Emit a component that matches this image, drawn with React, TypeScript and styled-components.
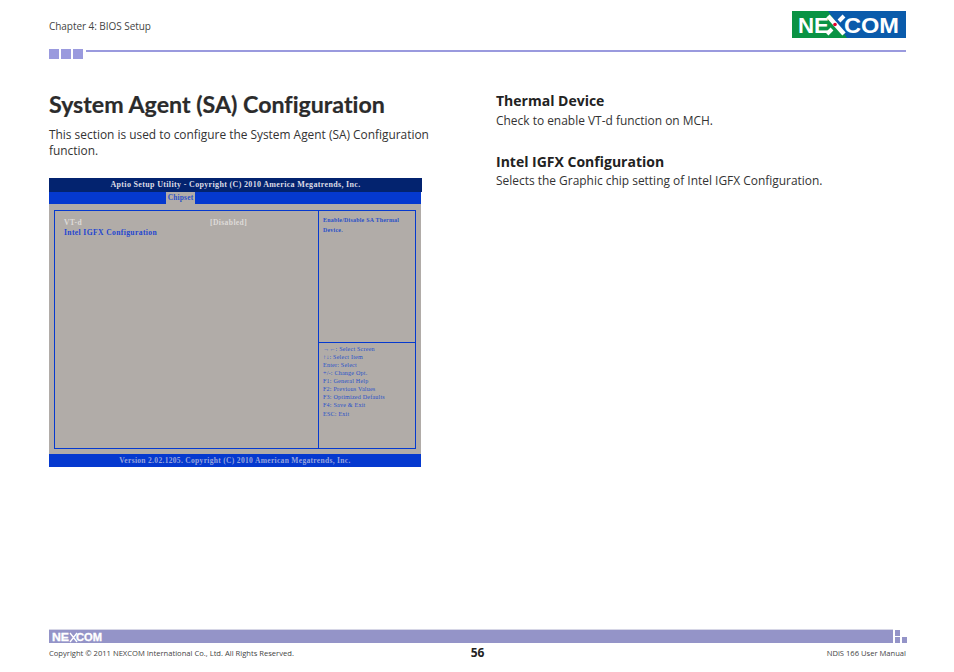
import React from "react";
import styled, { createGlobalStyle } from "styled-components";

const Global = createGlobalStyle`
  html, body { margin: 0; padding: 0; background: #fff; }
  body { font-family: "Open Sans", "Noto Sans", sans-serif; color: #3c3c3c; }
`;
const Page = styled.div`
  width: 954px; height: 672px; overflow: hidden; display: flex; flex-direction: column;
  box-sizing: border-box; padding: 11px 48px 0 49px;
`;
const Header = styled.header`
  height: 27px; display: flex; justify-content: space-between; align-items: center;
`;
const Chapter = styled.div`font-size: 10px; line-height: 14px; color: #444; letter-spacing: -0.05px; margin-top: 3px;`;
const Rule = styled.div`
  height: 10px; margin-top: 11px; display: flex; gap: 2px; align-items: flex-start;
`;
const Square = styled.span`width: 10px; height: 10px; background: #9a9ade; flex: none;`;
const RuleLine = styled.span`flex: 1; height: 2px; margin-left: 1px; margin-top: 1px; background: #9a9ade;`;
const Columns = styled.main`
  display: flex; flex: 1; min-height: 0;
`;
const Left = styled.section`width: 447px; flex: none; padding-top: 29px;`;
const Right = styled.section`flex: 1; padding-top: 32px;`;
const Title = styled.h1`
  margin: 0; font-family: "Lato", "Open Sans", sans-serif; font-size: 23.2px; line-height: 32px; font-weight: 700; color: #2b2b2b;
  font-variant-ligatures: none; -webkit-text-stroke: 0.2px #2b2b2b;
`;
const Para = styled.p`
  margin: 6px 0 0; width: 400px; font-size: 11.9px; line-height: 16px; color: #333;
`;
const Heading = styled.h2<{ $top?: number }>`
  margin: ${p => p.$top ?? 0}px 0 0; font-size: 14px; line-height: 20px; font-weight: 700; color: #222;
`;
const Body = styled.p<{ $top: number }>`
  margin: ${p => p.$top}px 0 0; font-size: 11.95px; line-height: 16px; color: #333;
`;

const Bios = styled.div`
  margin-top: 20px; width: 373px; font-family: "Liberation Serif", serif; font-weight: 700; font-size: 6.9px;
`;
const BiosTitle = styled.div`
  height: 14px; background: #03236f; color: #dcdce6; font-size: 8px; letter-spacing: 0.34px; line-height: 14px; text-align: center;
`;
const TabBar = styled.div`
  height: 12px; width: 372px; background: #0539cf; padding-left: 117px; box-sizing: border-box;
`;
const Tab = styled.span`
  display: inline-block; height: 12px; width: 29px; box-sizing: border-box; text-align: center;
  background: #b1aca8; color: #2a50c8; line-height: 12px; font-size: 7.4px; letter-spacing: 0.2px;
`;
const Gray = styled.div`
  width: 372px; height: 250px; box-sizing: border-box; background: #b1aca8; padding: 6px 5px 5px 5px;
`;
const Frame = styled.div`
  height: 239px; border: 1px solid #0539cf; display: grid; grid-template-columns: 264px 1fr; box-sizing: border-box;
`;
const MainPane = styled.div`padding: 7px 0 0 9px; border-right: 1px solid #0539cf;`;
const SideCol = styled.div`display: grid; grid-template-rows: 132px 1fr;`;
const HelpTop = styled.div`
  border-bottom: 1px solid #0539cf; padding: 4px 8px 0 4px; color: #2a50c8; font-size: 5.9px; letter-spacing: 0.25px; line-height: 10px;
`;
const HelpKeys = styled.div`padding: 2px 0 0 4px; color: #2a52c8; font-size: 6.1px; letter-spacing: 0.2px; font-weight: 400; line-height: 8px;`;
const Row = styled.div`display: flex; height: 10px; line-height: 10px; font-size: 7.6px; letter-spacing: 0.38px;`;
const RowLabel = styled.span<{ $link?: boolean }>`width: 146px; color: ${p => (p.$link ? "#1f46d0" : "#dedbd8")};`;
const RowValue = styled.span`color: #dedbd8;`;
const KeyLine = styled.div<{ $gap?: boolean }>`white-space: nowrap; margin-top: ${p => (p.$gap ? 1 : 0)}px;`;
const BiosFoot = styled.div`
  height: 13px; width: 372px; background: #0539cf; color: #98a4dc; text-align: center; font-size: 7.5px; letter-spacing: 0.32px; line-height: 13px;
`;

const Footer = styled.footer`margin-top: auto; padding-bottom: 12px;`;
const BarRow = styled.div`display: flex; gap: 2px; align-items: flex-start;`;
const Bar = styled.div`
  flex: none; width: 844px; height: 14px; background: #9494c8; border-top: 1px solid #d6d6e6;
  box-sizing: border-box; display: flex; align-items: center; padding-left: 2px;
`;
const Dots = styled.div`
  display: grid; grid-template-columns: 5px 5px; grid-auto-rows: 6px; gap: 1px 2px; margin-top: 1px;
`;
const Dot = styled.span<{ $off?: boolean }>`background: ${p => (p.$off ? "transparent" : "#9494c8")};`;
const FootText = styled.div`
  display: grid; grid-template-columns: 1fr auto 1fr; align-items: center; margin-top: 1px; height: 16px; color: #444; font-size: 7.6px;
`;
const PageNo = styled.span`font-size: 12px; font-weight: 700; color: #222;`;
const Manual = styled.span`text-align: right;`;

const Logo = () => (
  <svg width="114" height="27" viewBox="0 0 114 27">
    <rect width="114" height="27" fill="#0a5bab" />
    <polygon points="0,0 36,0 55,27 0,27" fill="#0a9344" />
    <text x="6" y="22" fontFamily="Liberation Sans" fontWeight="700" fontSize="22" fill="#fff" textLength="31" lengthAdjust="spacingAndGlyphs">NE</text>
    <path d="M36 5 L52 23" stroke="#fff" strokeWidth="4.5" />
    <path d="M52 5 L47 10 M40 18 L35 23" stroke="#fff" strokeWidth="4" />
    <circle cx="43" cy="13.5" r="1.8" fill="#e4002b" />
    <text x="52" y="22" fontFamily="Liberation Sans" fontWeight="700" fontSize="22" fill="#fff" textLength="55" lengthAdjust="spacingAndGlyphs">COM</text>
  </svg>
);
const MiniLogo = () => (
  <svg width="54" height="12" viewBox="0 0 54 12">
    <text x="1" y="10" fontFamily="Liberation Sans" fontWeight="700" fontSize="10.5" fill="#fff" stroke="#fff" strokeWidth="0.3" textLength="17" lengthAdjust="spacingAndGlyphs">NE</text>
    <path d="M19 2 L26 11 M26 2 L19 11" stroke="#fff" strokeWidth="1.3" />
    <text x="25" y="10" fontFamily="Liberation Sans" fontWeight="700" fontSize="10.5" fill="#fff" stroke="#fff" strokeWidth="0.3" textLength="26" lengthAdjust="spacingAndGlyphs">COM</text>
  </svg>
);

const keys = ["→←: Select Screen", "↑↓: Select Item", "Enter: Select", "+/-: Change Opt.", "F1: General Help", "F2: Previous Values", "F3: Optimized Defaults", "F4: Save & Exit"];

export default function App() {
  return (
    <Page>
      <Global />
      <Header>
        <Chapter>Chapter 4: BIOS Setup</Chapter>
        <Logo />
      </Header>
      <Rule>
        <Square /><Square /><Square /><RuleLine />
      </Rule>
      <Columns>
        <Left>
          <Title>System Agent (SA) Configuration</Title>
          <Para>This section is used to configure the System Agent (SA) Configuration function.</Para>
          <Bios>
            <BiosTitle>Aptio Setup Utility - Copyright (C) 2010 America Megatrends, Inc.</BiosTitle>
            <TabBar><Tab>Chipset</Tab></TabBar>
            <Gray>
              <Frame>
                <MainPane>
                  <Row><RowLabel>VT-d</RowLabel><RowValue>[Disabled]</RowValue></Row>
                  <Row><RowLabel $link>Intel IGFX Configuration</RowLabel></Row>
                </MainPane>
                <SideCol>
                  <HelpTop>Enable/Disable SA Thermal Device.</HelpTop>
                  <HelpKeys>
                    {keys.map(k => <KeyLine key={k}>{k}</KeyLine>)}
                    <KeyLine $gap>ESC: Exit</KeyLine>
                  </HelpKeys>
                </SideCol>
              </Frame>
            </Gray>
            <BiosFoot>Version 2.02.1205. Copyright (C) 2010 American Megatrends, Inc.</BiosFoot>
          </Bios>
        </Left>
        <Right>
          <Heading>Thermal Device</Heading>
          <Body $top={2}>Check to enable VT-d function on MCH.</Body>
          <Heading $top={23}>Intel IGFX Configuration</Heading>
          <Body $top={1}>Selects the Graphic chip setting of Intel IGFX Configuration.</Body>
        </Right>
      </Columns>
      <Footer>
        <BarRow>
          <Bar><MiniLogo /></Bar>
          <Dots><Dot /><Dot $off /><Dot /><Dot /></Dots>
        </BarRow>
        <FootText>
          <span>Copyright © 2011 NEXCOM International Co., Ltd. All Rights Reserved.</span>
          <PageNo>56</PageNo>
          <Manual>NDiS 166 User Manual</Manual>
        </FootText>
      </Footer>
    </Page>
  );
}
